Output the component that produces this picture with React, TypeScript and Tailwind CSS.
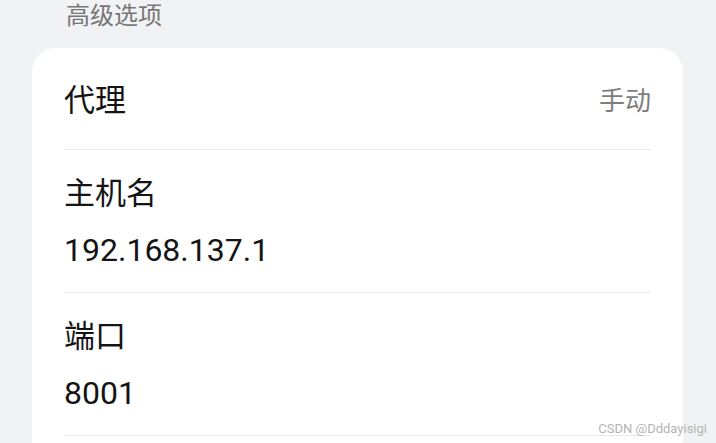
const font = { fontFamily: "Roboto, 'Noto Sans CJK SC', sans-serif" };

const Divider = () => <div className="h-px bg-[#e9e9eb]" />;

const FieldRow = ({ title, value }: { title: string; value: string }) => (
  <div className="flex flex-col pt-[24px] pb-[22px]">
    <p className="text-[31px] leading-[40px] text-[#141414]">{title}</p>
    <p className="mt-[16px] text-[32px] leading-[40px] text-[#141414]">{value}</p>
  </div>
);

export default function App() {
  return (
    <div className="relative h-[443px] w-[716px] overflow-hidden bg-[#f1f2f4]" style={font}>
      {/* section header */}
      <p className="pl-[66px] pt-[1px] text-[24px] leading-[30px] text-[#777777]">高级选项</p>

      {/* settings card */}
      <div className="ml-[32px] mt-[17px] w-[651px] rounded-[24px] bg-white px-[32px] pb-[40px]">
        <div className="flex flex-row items-center justify-between pt-[33px] pb-[28px]">
          <p className="text-[31px] leading-[40px] text-[#141414]">代理</p>
          <p className="text-[26px] leading-[40px] text-[#7d7d7d]">手动</p>
        </div>
        <Divider />
        <FieldRow title="主机名" value="192.168.137.1" />
        <Divider />
        <FieldRow title="端口" value="8001" />
        <Divider />
      </div>

      {/* watermark */}
      <span className="absolute right-[9px] top-[421px] text-[13px] leading-[16px] text-[#b4b4b4]">
        CSDN @Dddayisigi
      </span>
    </div>
  );
}
